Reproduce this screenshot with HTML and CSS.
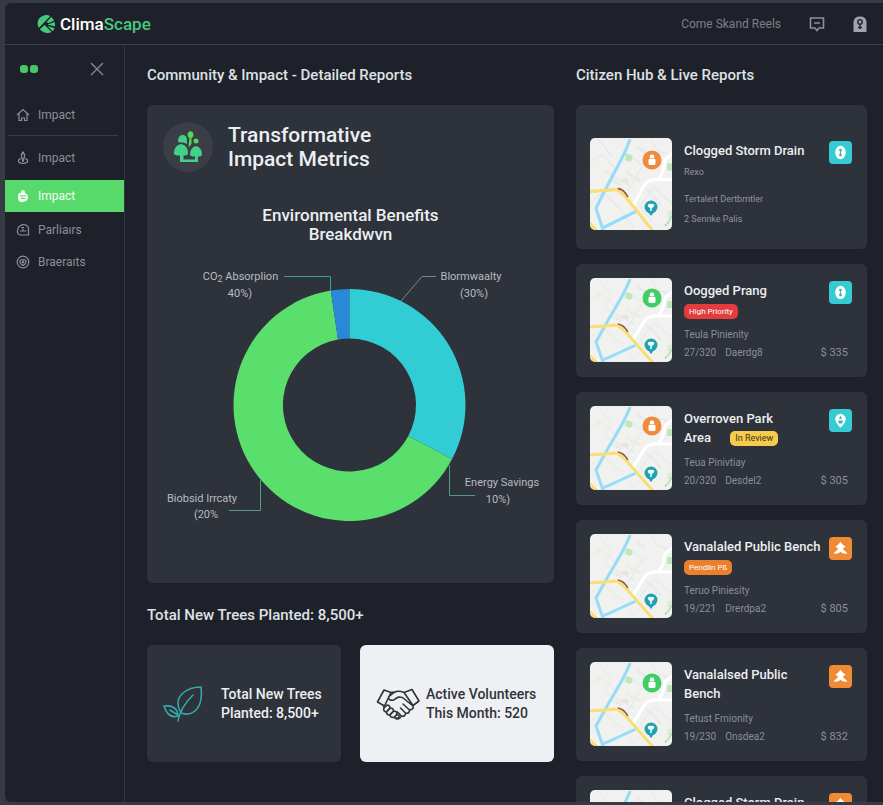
FILE: index.html
```html
<!DOCTYPE html>
<html lang="en">
<head>
<meta charset="utf-8">
<meta name="viewport" content="width=device-width, initial-scale=1">
<title>ClimaScape</title>
<link rel="stylesheet" href="styles.css">
</head>
<body>
<svg class="defs" aria-hidden="true">
  <symbol id="map" viewBox="0 0 82 84" preserveAspectRatio="none">
    <rect width="82" height="84" fill="#f1f1f0"/>
    <path d="M0 22 12 15 26 29M7 0l15 17M42 0l-8 14 22 12M0 60l13-11 15 14M14 30l30 16M52 26 38 48M28 62l16 20M66 44 50 62l12 14M66 46l16 14M60 0l8 12 14 4" fill="none" stroke="#e4e5e5" stroke-width="1"/>
    <path d="M36 31l14 8M22 38l10 5M46 8l9 5M57 47l14 15" fill="none" stroke="#e9eaea" stroke-width="3"/>
    <path d="M82 38H65Q56 38 52 47L42 63M67 39Q73 35 75 20L82 14" fill="none" stroke="#fff" stroke-width="3"/>
    <path d="M36 14l7 2-2 6-6-2zM77 23h5v7h-5z" fill="#bfe7bb"/>
    <path d="M33 36l6 2-1 4-6-2zM77 68l5-3v7l-4 3z" fill="#dcecd6"/>
    <path d="M75 80q5-3 7-10" fill="none" stroke="#a9dba9" stroke-width="2" stroke-dasharray="2 1"/>
    <path d="M40 1Q36 12 27 27T6 64l7 20M13 82l33-15" fill="none" stroke="#94dcf8" stroke-width="3"/>
    <path d="M0 49l27-2 8 6 28 32M0 78l7 7" fill="none" stroke="#f9de76" stroke-width="3"/>
    <path d="M28 46q6 1 10 8" fill="none" stroke="#8a5a44" stroke-width="1.500"/>
  </symbol>
  <symbol id="pin-drop" viewBox="0 0 14 16">
    <path d="M7 16 4 12h6z" fill="#239fb2"/><circle cx="7" cy="7" r="6.500" fill="#239fb2"/>
    <path d="M3.600 5q1.400-2 3.400-1 2-1 3.400 1Q9.500 8 7.800 8.300V11H6.200V8.300Q4.300 8 3.600 5z" fill="#e9fbff"/>
  </symbol>
  <symbol id="pin-main" viewBox="0 0 20 20">
    <circle cx="10" cy="10" r="9.500" fill="currentColor"/>
    <rect x="7.800" y="4.500" width="4.400" height="5" rx="1.500" fill="#fff"/><rect x="6.500" y="8.500" width="7" height="6.500" rx="1.500" fill="#fff"/>
    <path d="M7 8.500h6" stroke="currentColor" stroke-width=".6"/>
  </symbol>
  <symbol id="tag-a" viewBox="0 0 24 24">
    <ellipse cx="12" cy="12" rx="5.500" ry="7" fill="#fff"/>
    <circle cx="12" cy="9.500" r="1.500" fill="#2fb4bc"/><circle cx="12" cy="14.500" r="1.500" fill="#2fb4bc"/><path d="M11.500 10h1v4h-1z" fill="#2fb4bc"/>
  </symbol>
  <symbol id="tag-b" viewBox="0 0 24 24">
    <path d="M12 5q5.500 1 5.500 6-.5 4-5.500 8.500-5-4.500-5.500-8.500 0-5 5.500-6z" fill="#fff"/>
    <path d="M12 7l1.500 3.500h-3zM9.500 12h5l-1 3h-3z" fill="#2fb4bc"/>
  </symbol>
  <symbol id="tag-up" viewBox="0 0 24 24">
    <path d="M12 5q2 3.500 5.500 5l-3 2q1.500 3 4 4v1.500q-4 .5-6.500-2-2.500 2.500-6.500 2V16q2.500-1 4-4l-3-2Q10 8.500 12 5z" fill="#fff"/>
  </symbol>
</svg>

<div class="app">
  <header class="topbar">
    <a class="brand" href="#">
      <svg class="brand-mark" viewBox="0 0 20 20" aria-hidden="true">
        <path d="M1 12Q-.5 6 4 2.500 9-.8 14 1.500L2 14zM15 2.500q2 1.500 3 4l-6 2.500-2-1zM11 10.500l7.500-2.500q.8 2 .3 4.500zM11 12l7.500 2.500q-1 2-2 3zM3 15.500l5-4.500 7.500 7.500Q8.500 21.500 3 15.500z" fill="#43ca7d"/>
      </svg>
      <span class="brand-name">Clima<span class="brand-accent">Scape</span></span>
    </a>
    <nav class="topnav" aria-label="Account">
      <a href="#">Come Skand Reels</a>
      <button class="icon-btn" type="button" aria-label="Messages">
        <svg width="16" height="16" viewBox="0 0 16 16"><path d="M1.500 2h13v10H10l-2 2.500L6 12H1.500z" fill="none" stroke="#8c9099" stroke-width="1.600"/><path d="M5 7h6" stroke="#8c9099" stroke-width="1.600"/></svg>
      </button>
      <button class="icon-btn" type="button" aria-label="Profile">
        <svg width="14" height="16" viewBox="0 0 14 16"><path d="M.5 16V6Q1 .5 7 .5T13.500 6v10z" fill="#a0a3ab"/><circle cx="7" cy="6" r="2.200" fill="none" stroke="#242831" stroke-width="1.500"/><path d="M7 8v5M5 11.500h4" stroke="#242831" stroke-width="1.500"/></svg>
      </button>
    </nav>
  </header>

  <div class="shell">
    <aside class="sidebar">
      <div class="side-head">
        <span class="dots"><i></i><i></i></span>
        <button class="icon-btn" type="button" aria-label="Close menu">
          <svg width="14" height="14" viewBox="0 0 14 14"><path d="M1 1l12 12M13 1 1 13" stroke="#7d818a" stroke-width="1.500"/></svg>
        </button>
      </div>
      <nav class="side-nav" aria-label="Sections">
        <a class="side-link" href="#">
          <svg viewBox="0 0 14 14"><path d="M1 7l6-5.500L13 7M3 6v6.500h2.500V10h3v2.500H11V6"/></svg>Impact</a>
        <hr class="side-rule">
        <a class="side-link spaced" href="#">
          <svg viewBox="0 0 14 14"><path d="M7 1Q9.500 4 8 7l-1 4-1-4Q4.500 4 7 1zM5 7.500Q2 8 2.500 11q4.500 3 9 0 .5-3-2.500-3.500"/></svg>Impact</a>
        <a class="side-link active" href="#" aria-current="page">
          <svg viewBox="0 0 14 14"><path d="M5 4q0-3 2-3t2 3q3 1 3 4.500T7 13 2 8.500 5 4z" fill="#f1fff1" stroke="none"/><path d="M4 7h6M5 9.500h4" stroke="#58cf69"/></svg>Impact</a>
        <a class="side-link" href="#">
          <svg viewBox="0 0 14 14"><path d="M2 5q3-4.500 8-3 3 1.500 2.500 5v5H4Q1 11 1.500 8zM4 8h6.500M7 5.500V8M5 4.500h3"/></svg>Parliaırs</a>
        <a class="side-link" href="#">
          <svg viewBox="0 0 14 14"><circle cx="7" cy="7" r="5.800"/><path d="M4 5.500q3-2 6 0 .5 3-3 5-3.500-2-3-5z"/><circle cx="7" cy="7" r=".8"/></svg>Braeraıts</a>
      </nav>
    </aside>

    <main class="content">
      <section class="reports">
        <h1 class="section-title">Community &amp; Impact - Detailed Reports</h1>
        <article class="card metrics">
          <header class="metrics-head">
            <span class="metrics-icon">
              <svg viewBox="0 0 28 32" width="28" height="32" aria-hidden="true">
                <g fill="#43d18a">
                  <path d="M4 11q0-7 4.500-7T13 9.500V13q-2.500-2-5.500-1.500z"/>
                  <path d="M0 22.500Q0 14 7 13q7 1 7 9.500 0 2-4.500 2V31H6v-6.500q-6 0-6-2z"/>
                  <path d="M16 23.500q0-7 6-8.500 6 1.500 6 8.500 0 2-4 2V31h-3v-5.500q-5 0-5-2z"/>
                  <path d="M7 28.500h16V31H7z"/>
                </g>
                <g fill="#51d957"><path d="M13.500 4q0-3 3-4 3 1 3 4 0 2.500-2 3v6l-2 2.500h-1l1-8.500q-2-.5-2-3z"/><circle cx="22" cy="10" r="2.500"/></g>
              </svg>
            </span>
            <h2 class="metrics-title">Transformative<br>Impact Metrics</h2>
          </header>
          <h3 class="chart-title">Environmental Benefits<br>Breakdwvn</h3>
          <svg class="chart" viewBox="0 0 407 270" role="img" aria-label="Environmental benefits breakdown">
            <path d="M305.100 199.100A116 116 0 1 1 183.800 30.500L191 79.500A66.500 66.500 0 1 0 261.300 176z" fill="#5ade6c"/>
            <path d="M183.800 30.500A116 116 0 0 1 202.500 29V78.500A66.500 66.500 0 0 0 191 79.500z" fill="#2a88d8"/>
            <path d="M202.500 29A116 116 0 0 1 305.100 199.100L261.300 176A66.500 66.500 0 0 0 202.500 78.500z" fill="#31ccd4"/>
            <g fill="none" stroke-width="1">
              <path d="M137 16.500h46.500V31" stroke="#3c9a9a"/>
              <path d="M289 16.500h-14L254 41" stroke="#6f8c92"/>
              <path d="M302.500 205v30.500H328" stroke="#4f9e83"/>
              <path d="M113.500 220v30.500H82" stroke="#4f9e83"/>
            </g>
            <g class="chart-labels">
              <text x="93.500" y="20">CO<tspan class="sub" dy="2">2</tspan><tspan dy="-2"> Absorplion</tspan></text>
              <text x="93" y="37">40%)</text>
              <text x="324" y="20">Blormwaalty</text>
              <text x="327" y="37">(30%)</text>
              <text x="355" y="226">Energy Savings</text>
              <text x="351" y="243">10%)</text>
              <text x="55" y="242">Biobsid Irrcaty</text>
              <text x="59" y="258">(20%</text>
            </g>
          </svg>
        </article>

        <h2 class="section-title totals-title">Total New Trees Planted: 8,500+</h2>
        <div class="stats">
          <article class="card stat">
            <svg class="leaf" width="40" height="36" viewBox="0 0 40 36" fill="none" stroke="#35a8a8" stroke-width="1.600" stroke-linejoin="round" stroke-linecap="round" aria-hidden="true">
              <path d="M38 1Q40 18 32 25q-6 5-14 2-7-12 2-20Q27 1 38 1zM15 35Q17 22 30 9M1 20q10-1 13 5l1 5Q5 33 1 20zM7 24l8 5"/>
            </svg>
            <p>Total New Trees<br>Planted: 8,500+</p>
          </article>
          <article class="card stat stat-light">
            <svg class="hands" width="44" height="32" viewBox="0 0 44 32" fill="none" stroke="#30333a" stroke-width="1.600" stroke-linejoin="round" stroke-linecap="round" aria-hidden="true">
              <path d="M1.500 14 8 2l7 2.500L8.500 18zM28 4.500 36 1.500 43 13l-6 4.500zM15 4.500l6-1M28 4.500Q22 2 18 4.500L12.500 9q0 4 5 3l5-3 4 .5L37 18q1 3-3 4M8.500 18l-1 1"/>
              <path d="M27 16l6.500 6q0 4-4 3l-5-5M29.500 25q0 4-4 3l-4-4M25.500 28q-2 4-5.500 2"/>
              <path d="M8 20l3-3q3 0 3 3l-4 4q-3-1-2-4zM10.500 24l4-4q3 0 3 3l-4 4q-3 0-3-3zM14 27l4-4q3 0 3 3l-3 3.500q-4 0-4-2.500zM18 29.500l3-3q3 1 2 3l-2 1.500z"/>
            </svg>
            <p>Active Volunteers<br>This Month: 520</p>
          </article>
        </div>
      </section>

      <section class="feed">
        <h2 class="section-title">Citizen Hub &amp; Live Reports</h2>
        <div class="feed-list">
          <article class="card report report-lead">
            <svg class="map" viewBox="0 0 82 92" role="img" aria-label="Map"><use href="#map" width="82" height="92"/><use class="orange" href="#pin-main" x="52" y="12" width="20" height="20"/><use href="#pin-drop" x="54" y="62" width="14" height="16"/></svg>
            <div class="report-body">
              <h3>Clogged Storm Drain</h3>
              <p class="note">Rexo</p>
              <p class="note note-gap">Tertalert Dertbmtler</p>
              <p class="note">2 Sennke Palis</p>
            </div>
            <svg class="tag tag-cyan" aria-hidden="true"><use href="#tag-a"/></svg>
          </article>

          <article class="card report">
            <svg class="map" viewBox="0 0 82 84" role="img" aria-label="Map"><use href="#map" width="82" height="84"/><use class="green" href="#pin-main" x="52" y="10" width="20" height="20"/><use href="#pin-drop" x="54" y="60" width="14" height="16"/></svg>
            <div class="report-body">
              <h3>Oogged Prang</h3>
              <span class="badge badge-red">High Priority</span>
              <div class="meta"><p>Teula Pinienity</p><p class="meta-row"><span>27/320</span><span>Daerdg8</span><span class="amount">$ 335</span></p></div>
            </div>
            <svg class="tag tag-cyan" aria-hidden="true"><use href="#tag-a"/></svg>
          </article>

          <article class="card report">
            <svg class="map" viewBox="0 0 82 84" role="img" aria-label="Map"><use href="#map" width="82" height="84"/><use class="orange" href="#pin-main" x="52" y="10" width="20" height="20"/><use href="#pin-drop" x="54" y="60" width="14" height="16"/></svg>
            <div class="report-body">
              <h3>Overroven Park<br>Area <span class="badge badge-yellow">In Review</span></h3>
              <div class="meta"><p>Teua Pinivtiay</p><p class="meta-row"><span>20/320</span><span>Desdel2</span><span class="amount">$ 305</span></p></div>
            </div>
            <svg class="tag tag-cyan" aria-hidden="true"><use href="#tag-b"/></svg>
          </article>

          <article class="card report">
            <svg class="map" viewBox="0 0 82 84" role="img" aria-label="Map"><use href="#map" width="82" height="84"/><use href="#pin-drop" x="54" y="59" width="14" height="16"/></svg>
            <div class="report-body">
              <h3>Vanalaled Public Bench</h3>
              <span class="badge badge-orange">Pendlin Pß</span>
              <div class="meta"><p>Teruo Piniesity</p><p class="meta-row"><span>19/221</span><span>Drerdpa2</span><span class="amount">$ 805</span></p></div>
            </div>
            <svg class="tag tag-orange" aria-hidden="true"><use href="#tag-up"/></svg>
          </article>

          <article class="card report">
            <svg class="map" viewBox="0 0 82 84" role="img" aria-label="Map"><use href="#map" width="82" height="84"/><use class="green" href="#pin-main" x="52" y="11" width="20" height="20"/><use href="#pin-drop" x="54" y="60" width="14" height="16"/></svg>
            <div class="report-body">
              <h3>Vanalalsed Public<br>Bench</h3>
              <div class="meta"><p>Tetust Fmionity</p><p class="meta-row"><span>19/230</span><span>Onsdea2</span><span class="amount">$ 832</span></p></div>
            </div>
            <svg class="tag tag-orange" aria-hidden="true"><use href="#tag-up"/></svg>
          </article>

          <article class="card report">
            <svg class="map" viewBox="0 0 82 84" role="img" aria-label="Map"><use href="#map" width="82" height="84"/></svg>
            <div class="report-body"><h3>Clogged Storm Drain</h3></div>
            <svg class="tag tag-orange" aria-hidden="true"><use href="#tag-up"/></svg>
          </article>
        </div>
      </section>
    </main>
  </div>
</div>
</body>
</html>
```

FILE: styles.css
```css
* { box-sizing: border-box; }

body {
  margin: 0;
  height: 100vh;
  padding: 3px 0 3px 5px;
  overflow: hidden;
  background: #353a44;
  color: #eceef1;
  font-family: Roboto, "Liberation Sans", sans-serif;
}

h1, h2, h3, p { margin: 0; font-weight: 500; }
a { color: inherit; text-decoration: none; }
.defs { position: absolute; width: 0; height: 0; }

.icon-btn {
  display: flex;
  padding: 0;
  border: 0;
  background: none;
  cursor: pointer;
}

.app {
  display: flex;
  flex-direction: column;
  height: 100%;
  overflow: hidden;
  border-radius: 6px 0 0 6px;
  background: #1e2129;
}

/* Top bar */
.topbar {
  display: flex;
  flex: none;
  align-items: center;
  justify-content: space-between;
  height: 42px;
  padding: 0 16px 0 32px;
  border-bottom: 1px solid #3b3f47;
}
.brand { display: flex; align-items: center; gap: 4px; }
.brand-mark { width: 19px; height: 20px; }
.brand-name { font-size: 17px; line-height: 24px; font-weight: 500; color: #fff; }
.brand-accent { color: #43ca7d; }
.topnav { display: flex; align-items: center; font-size: 12px; color: #7c8089; }
.topnav .icon-btn { margin-left: 28px; }

/* Sidebar */
.shell { display: flex; flex: 1; min-height: 0; }
.sidebar { flex: none; width: 120px; border-right: 1px solid #343840; }
.side-head {
  display: flex;
  align-items: center;
  justify-content: space-between;
  padding: 17px 20px 23px 15px;
}
.dots { display: flex; gap: 2px; }
.dots i { width: 8px; height: 8px; border-radius: 3px; background: #45c968; }
.side-link {
  display: flex;
  align-items: center;
  gap: 8px;
  height: 32px;
  padding-left: 11px;
  font-size: 12px;
  color: #8b8f97;
}
.side-link svg { width: 14px; height: 14px; fill: none; stroke: currentColor; stroke-width: 1.200; }
.side-rule { margin: 4px 6px 6px 3px; border: 0; border-top: 1px solid #383c44; }
.spaced { margin-bottom: 6px; }
.active { margin-bottom: 2px; background: #58d96c; color: #f1fff1; }

/* Content */
.content {
  display: grid;
  flex: 1;
  grid-template-columns: minmax(0, 407fr) minmax(0, 291fr);
  gap: 22px;
  padding: 20px 16px 0 22px;
  overflow: hidden;
}
.section-title { margin-bottom: 20px; font-size: 15px; line-height: 20px; color: #dfe1e5; }
.card { border-radius: 6px; background: #2e323a; }

.metrics { padding-bottom: 53px; }
.metrics-head { display: flex; align-items: center; gap: 15px; padding: 17px 16px 0; }
.metrics-icon {
  display: flex;
  align-items: center;
  justify-content: center;
  width: 50px;
  height: 50px;
  border-radius: 50%;
  background: #3b3e46;
}
.metrics-title { font-size: 21px; line-height: 24px; }
.chart-title { margin: 34px 0 16px; font-size: 17px; line-height: 19px; text-align: center; }
.chart { display: block; width: 100%; }
.chart-labels { fill: #b9bbc0; font-size: 11px; text-anchor: middle; }
.sub { font-size: 9px; }

.totals-title { margin-top: 22px; }
.stats { display: grid; grid-template-columns: 1fr 1fr; gap: 19px; }
.stat {
  display: flex;
  align-items: center;
  gap: 18px;
  min-height: 117px;
  padding: 0 16px;
  font-size: 14px;
  line-height: 19px;
}
.stat svg { flex: none; }
.stat p { white-space: nowrap; }
.stat-light { gap: 6px; background: #eff0f3; color: #30333a; }

/* Live reports */
.feed-list { display: flex; flex-direction: column; gap: 15px; }
.report { display: flex; align-items: flex-start; padding: 14px 15px 15px 14px; }
.report-lead { padding: 33px 15px 19px 14px; }
.map { flex: none; width: 82px; border-radius: 5px; }
.orange { color: #f08a3c; }
.green { color: #3fce63; }
.report-body {
  display: flex;
  flex: 1;
  flex-direction: column;
  align-items: flex-start;
  align-self: stretch;
  min-width: 0;
  padding: 3px 0 0 12px;
}
.report-body h3 { font-size: 13px; line-height: 19px; white-space: nowrap; }
.note { margin-top: 4px; font-size: 9px; line-height: 16px; font-weight: 400; color: #9194a0; }
.note-gap { margin-top: 11px; }
.badge {
  height: 15px;
  margin-top: 4px;
  padding: 0 5px;
  border-radius: 5px;
  font-size: 8px;
  line-height: 15px;
  color: #fff;
}
.badge-red { background: #e43c3c; }
.badge-orange { background: #ea7f2e; }
.badge-yellow {
  display: inline-block;
  margin: 0 0 0 16px;
  background: #f9cb4b;
  color: #3a3320;
  font-size: 9px;
  font-weight: 400;
  vertical-align: middle;
}
.meta { align-self: stretch; margin-top: auto; font-size: 10px; line-height: 18px; color: #8b8e96; }
.meta p { font-weight: 400; }
.meta-row { display: flex; gap: 9px; margin-right: -19px; }
.amount { margin-left: auto; font-size: 11px; }
.tag { flex: none; width: 23px; height: 23px; margin-top: 3px; border-radius: 4px; }
.tag-cyan { background: #35cbd0; }
.tag-orange { background: #f08a35; }
```
